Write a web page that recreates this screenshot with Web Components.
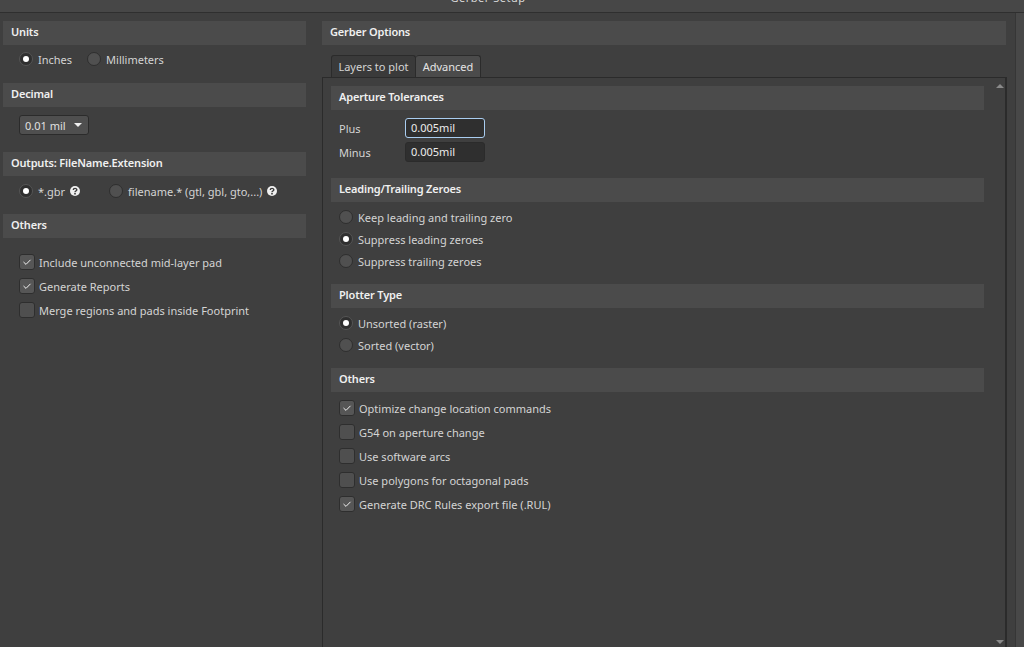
<!DOCTYPE html>
<html lang="en">

<head>
    <meta charset="UTF-8" />
    <title>Gerber Setup</title>
    <style>
        html,
        body {
            margin: 0;
            height: 100%;
            overflow: hidden;
            background: #3f3f3f;
        }

        body {
            font: 11px "Noto Sans", "Open Sans", sans-serif;
            color: #d4d4d4;
        }
    </style>
</head>

<body>
    <gerber-setup></gerber-setup>

    <script>
        // small helper, every element below just sets its markup in the constructor
        class ShadowElement extends HTMLElement {
            constructor(html) {
                super();
                this.attachShadow({ mode: 'open' }).innerHTML = html;
            }
        }

        class SectionHeader extends ShadowElement {
            constructor() {
                super(`
                    <style>
                        :host {
                            box-sizing: border-box;
                            display: flex;
                            align-items: center;
                            height: 24px;
                            padding: 0 0 4px 8px;
                            background: #4b4b4b;
                            color: #f0f0f0;
                            font-weight: 600;
                            font-size: 11px;
                            letter-spacing: -0.17px;
                        }
                    </style>
                    <slot></slot>`);
            }
        }

        class HelpIcon extends ShadowElement {
            constructor() {
                super(`
                    <style>
                        :host { display: inline-flex; margin-left: 5px; }
                        svg { display: block; }
                    </style>
                    <svg width="10" height="10" viewBox="0 0 10 10">
                        <circle cx="5" cy="5" r="5" fill="#f0f0f0" />
                        <path d="M3.3 3.9C3.3 1.9 6.8 1.9 6.8 3.8 6.8 5 5 5 5 6.2" fill="none" stroke="#3a3a3a" stroke-width="1.4" />
                        <rect x="4.2" y="7" width="1.6" height="1.5" fill="#3a3a3a" />
                    </svg>`);
            }
        }

        class RadioOption extends ShadowElement {
            constructor() {
                super(`
                    <style>
                        :host {
                            display: inline-flex;
                            align-items: center;
                            gap: 5px;
                            height: 22px;
                            color: #d4d4d4;
                        }
                        .dot {
                            box-sizing: border-box;
                            width: 14px;
                            height: 14px;
                            border-radius: 50%;
                            border: 1px solid #2e2e2e;
                            background: #505050;
                            display: flex;
                            align-items: center;
                            justify-content: center;
                        }
                        :host([checked]) .dot {
                            background: #2f2f2f;
                            border-color: #555;
                        }
                        :host([checked]) .dot::after {
                            content: "";
                            width: 6px;
                            height: 6px;
                            border-radius: 50%;
                            background: #fff;
                        }
                    </style>
                    <span class="dot"></span><slot></slot>`);
            }
        }

        class CheckOption extends ShadowElement {
            constructor() {
                super(`
                    <style>
                        :host {
                            display: flex;
                            align-items: center;
                            gap: 4px;
                            height: 24px;
                            color: #d4d4d4;
                        }
                        .box {
                            box-sizing: border-box;
                            width: 16px;
                            height: 16px;
                            border-radius: 3px;
                            border: 1px solid #2e2e2e;
                            background: #4f4f4f;
                        }
                        :host([checked]) .box { background: #565656; }
                        svg { display: none; }
                        :host([checked]) svg { display: block; }
                    </style>
                    <span class="box">
                        <svg width="14" height="14" viewBox="0 0 14 14">
                            <path d="M3.5 7 6 9.4 10.5 4.8" fill="none" stroke="#f2f2f2" stroke-width="1" />
                        </svg>
                    </span><slot></slot>`);
            }
        }

        class DropDown extends ShadowElement {
            constructor() {
                super(`
                    <style>
                        :host {
                            box-sizing: border-box;
                            display: flex;
                            align-items: center;
                            justify-content: space-between;
                            width: 70px;
                            height: 20px;
                            padding: 0 6px 0 5px;
                            border: 1px solid #2b2b2b;
                            border-radius: 3px;
                            background: #4f4f4f;
                            color: #e0e0e0;
                        }
                        i {
                            width: 0;
                            height: 0;
                            border: 4px solid transparent;
                            border-top: 4px solid #f0f0f0;
                            border-bottom: 0;
                        }
                    </style>
                    <slot></slot><i></i>`);
            }
        }

        class ToleranceField extends ShadowElement {
            constructor() {
                super(`
                    <style>
                        :host {
                            display: flex;
                            align-items: center;
                            height: 24px;
                        }
                        label { width: 66px; color: #d4d4d4; }
                        .val {
                            box-sizing: border-box;
                            width: 80px;
                            height: 20px;
                            padding: 0 0 1px 5px;
                            display: flex;
                            align-items: center;
                            border: 1px solid #2b2b2b;
                            border-radius: 3px;
                            background: #2f2f2f;
                            color: #ececec;
                        }
                        :host([focused]) .val { border-color: #a9cdf0; }
                    </style>
                    <label><slot name="label"></slot></label>
                    <div class="val"><slot></slot></div>`);
            }
        }

        class TabBar extends ShadowElement {
            constructor() {
                super(`
                    <style>
                        :host {
                            display: flex;
                            height: 22px;
                            margin: 10px 0 0 9px;
                        }
                        ::slotted(span) {
                            box-sizing: border-box;
                            display: flex;
                            align-items: center;
                            justify-content: center;
                            height: 22px;
                            border: 1px solid #2b2b2b;
                            border-bottom: 0;
                            border-radius: 3px 3px 0 0;
                        }
                    </style>
                    <slot></slot>`);
            }
        }

        class GerberSetup extends ShadowElement {
            constructor() {
                super(`
                    <style>
                        :host {
                            display: flex;
                            flex-direction: column;
                            height: 647px;
                            overflow: hidden;
                        }
                        .title {
                            flex: none;
                            height: 12px;
                            overflow: hidden;
                            background: #474747;
                            border-bottom: 1px solid #2f2f2f;
                            text-align: center;
                            padding-right: 48px;
                            line-height: 14px;
                            letter-spacing: 0.5px;
                            color: #d8d8d8;
                        }
                        .title span { display: block; margin-top: -9px; }
                        .frame { flex: 1; display: flex; min-height: 0; }
                        .main {
                            flex: 1;
                            display: flex;
                            gap: 16px;
                            padding: 8px 9px 0 3px;
                            min-height: 0;
                        }
                        .side-strip {
                            flex: none;
                            width: 8px;
                            background: #484848;
                            border-left: 1px solid #363636;
                        }
                        .left { flex: none; width: 303px; }
                        .right { flex: 1; display: flex; flex-direction: column; min-width: 0; }
                        .row { display: flex; align-items: center; }
                        .tab-on { width: 85px; background: #3a3a3a; color: #d4d4d4; }
                        .tab-off { width: 65px; background: #4b4b4b; color: #e4e4e4; border-left: 0 !important; }
                        .panel {
                            flex: 1;
                            min-height: 0;
                            position: relative;
                            margin-right: -1px;
                            border: 1px solid #2b2b2b;
                            border-width: 1px 2px 0 1px;
                            padding: 8px 21px 0 8px;
                        }
                        .arrow {
                            position: absolute;
                            right: 1px;
                            width: 0;
                            height: 0;
                            border: 4px solid transparent;
                        }
                        .up { top: 6px; border-top: 0; border-bottom: 4px solid #8a8a8a; }
                        .down { bottom: 3px; border-bottom: 0; border-top: 4px solid #8a8a8a; }
                    </style>
                    <div class="title"><span>Gerber Setup</span></div>
                    <div class="frame">
                        <div class="main">
                            <div class="left">
                                <section-header>Units</section-header>
                                <div class="row" style="padding:4px 0 2px 16px;gap:15px;height:20px">
                                    <radio-option checked>Inches</radio-option>
                                    <radio-option>Millimeters</radio-option>
                                </div>
                                <section-header style="margin-top:12px">Decimal</section-header>
                                <div style="padding:8px 0 17px 16px">
                                    <drop-down>0.01 mil</drop-down>
                                </div>
                                <section-header>Outputs: FileName.Extension</section-header>
                                <div class="row" style="padding:4px 0 0 16px;height:22px">
                                    <radio-option checked>*.gbr</radio-option><help-icon></help-icon>
                                    <radio-option style="margin-left:29px">filename.* (gtl, gbl, gto,...)</radio-option><help-icon></help-icon>
                                </div>
                                <section-header style="margin-top:12px">Others</section-header>
                                <div style="padding:12px 0 0 16px">
                                    <check-option checked>Include unconnected mid-layer pad</check-option>
                                    <check-option checked>Generate Reports</check-option>
                                    <check-option>Merge regions and pads inside Footprint</check-option>
                                </div>
                            </div>
                            <div class="right">
                                <section-header>Gerber Options</section-header>
                                <tab-bar>
                                    <span class="tab-on">Layers to plot</span>
                                    <span class="tab-off">Advanced</span>
                                </tab-bar>
                                <div class="panel">
                                    <i class="arrow up"></i>
                                    <section-header>Aperture Tolerances</section-header>
                                    <div style="padding:6px 0 0 8px">
                                        <tolerance-field focused><span slot="label">Plus</span>0.005mil</tolerance-field>
                                        <tolerance-field><span slot="label">Minus</span>0.005mil</tolerance-field>
                                    </div>
                                    <section-header style="margin-top:14px">Leading/Trailing Zeroes</section-header>
                                    <div style="padding:4px 0 0 8px;display:grid;justify-items:start">
                                        <radio-option>Keep leading and trailing zero</radio-option>
                                        <radio-option checked>Suppress leading zeroes</radio-option>
                                        <radio-option>Suppress trailing zeroes</radio-option>
                                    </div>
                                    <section-header style="margin-top:12px">Plotter Type</section-header>
                                    <div style="padding:4px 0 0 8px;display:grid;justify-items:start">
                                        <radio-option checked>Unsorted (raster)</radio-option>
                                        <radio-option>Sorted (vector)</radio-option>
                                    </div>
                                    <section-header style="margin-top:12px">Others</section-header>
                                    <div style="padding:4px 0 0 8px">
                                        <check-option checked>Optimize change location commands</check-option>
                                        <check-option>G54 on aperture change</check-option>
                                        <check-option>Use software arcs</check-option>
                                        <check-option>Use polygons for octagonal pads</check-option>
                                        <check-option checked>Generate DRC Rules export file (.RUL)</check-option>
                                    </div>
                                    <i class="arrow down"></i>
                                </div>
                            </div>
                        </div>
                        <div class="side-strip"></div>
                    </div>`);
            }
        }

        customElements.define('section-header', SectionHeader);
        customElements.define('help-icon', HelpIcon);
        customElements.define('radio-option', RadioOption);
        customElements.define('check-option', CheckOption);
        customElements.define('drop-down', DropDown);
        customElements.define('tolerance-field', ToleranceField);
        customElements.define('tab-bar', TabBar);
        customElements.define('gerber-setup', GerberSetup);
    </script>
</body>

</html>
